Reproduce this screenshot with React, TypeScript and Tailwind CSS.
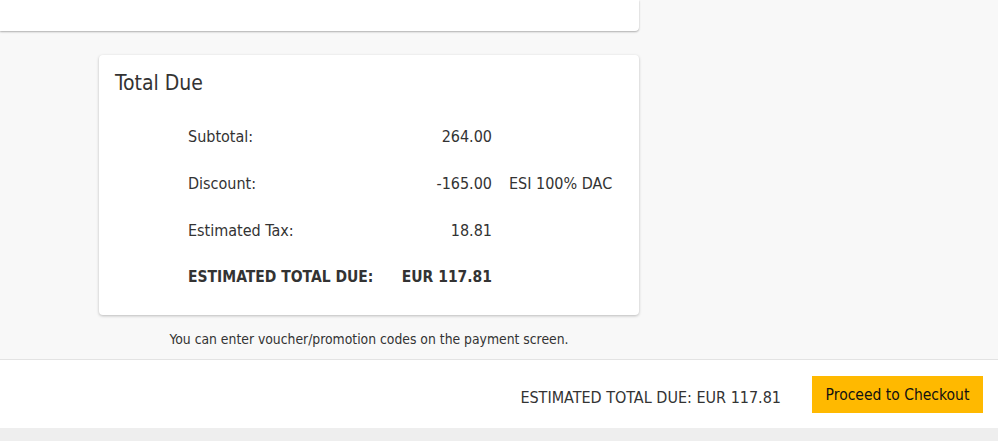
import React from "react";

const font = { fontFamily: '"DejaVu Sans Condensed", "DejaVu Sans", sans-serif' };

export default function App() {
  const rows = [
    { label: "Subtotal:", value: "264.00", note: "" },
    { label: "Discount:", value: "-165.00", note: "ESI 100% DAC" },
    { label: "Estimated Tax:", value: "18.81", note: "" },
  ];
  return (
    <div className="w-[998px] h-[441px] bg-[#f8f8f8] text-[#333333] overflow-hidden flex flex-col" style={font}>
      <div className="w-[639px] h-[31px] bg-white rounded-br shadow-[0_1px_2px_rgba(0,0,0,0.3)]" />
      <div className="w-[639px] pl-[99px] pt-[24px]">
        <div className="bg-white rounded shadow-[0_1px_3px_rgba(0,0,0,0.25)] pt-[14px] pb-[14px] px-[16px]">
          <h2 className="text-[21px] leading-[28px]">Total Due</h2>
          <div className="mt-[16px] ml-[73px] grid grid-cols-[196px_108px_auto] text-[16px]">
            {rows.map((r) => (
              <React.Fragment key={r.label}>
                <div className="h-[47px] flex items-center">{r.label}</div>
                <div className="h-[47px] flex items-center justify-end">{r.value}</div>
                <div className="h-[47px] flex items-center pl-[17px]">{r.note}</div>
              </React.Fragment>
            ))}
            <div className="h-[47px] flex items-center font-bold text-[15.5px]">ESTIMATED TOTAL DUE:</div>
            <div className="h-[47px] flex items-center justify-end font-bold text-[15.5px]">EUR 117.81</div>
            <div className="h-[47px]" />
          </div>
        </div>
        <p className="text-[13.8px] leading-[20px] text-center mt-[14px]">
          You can enter voucher/promotion codes on the payment screen.
        </p>
      </div>
      <div className="mt-[10px] h-[69px] bg-white border-t border-[#e3e3e3] flex items-center justify-end pr-[15px]">
        <span className="text-[16px] mr-[31px] mt-[7px]">ESTIMATED TOTAL DUE: EUR 117.81</span>
        <button className="h-[37px] w-[171px] bg-[#ffb900] text-[#111111] text-[15.5px] pt-[3px]">Proceed to Checkout</button>
      </div>
      <div className="flex-1 bg-[#eeeeee]" />
    </div>
  );
}
